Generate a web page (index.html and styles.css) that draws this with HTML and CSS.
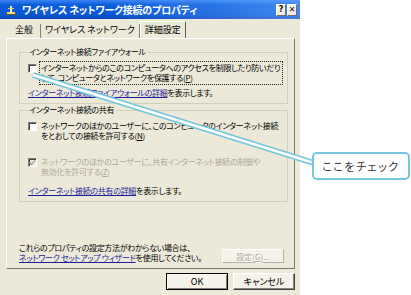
FILE: index.html
```html
<!DOCTYPE html>
<html lang="ja">
<head>
  <meta charset="UTF-8" />
  <title>ワイヤレス ネットワーク接続のプロパティ</title>
  <meta name="viewport" content="width=device-width, initial-scale=1.0" />
  <link rel="stylesheet" href="styles.css">
</head>
<body>
  <div class="stage">
    <div class="dialog">
      <div class="titlebar">
        <svg class="app-icon" width="12" height="12" viewBox="0 0 12 12">
          <rect x="1" y="8" width="10" height="3" fill="#6b5a1e" />
          <rect x="2" y="8" width="8" height="2" fill="#f2d77a" />
          <rect x="5" y="2" width="2" height="7" fill="#fbeeb8" />
          <rect x="3" y="4" width="6" height="1" fill="#e8c860" />
        </svg>
        <span class="title">ワイヤレス ネットワーク接続のプロパティ</span>
        <span class="tb-btn">?</span>
        <span class="tb-btn">✕</span>
      </div>

      <div class="tabs">
        <span class="tab first">全般</span>
        <span class="tab">ワイヤレス ネットワーク</span>
        <span class="tab active">詳細設定</span>
      </div>

      <div class="panel">
        <fieldset class="group">
          <legend>インターネット接続ファイアウォール</legend>
          <div class="check-row">
            <span class="cb"></span>
            <span class="cb-label focus">インターネットからのこのコンピュータへのアクセスを制限したり防いだり<br>して、コンピュータとネットワークを保護する(<u>P</u>)</span>
          </div>
          <p class="more"><a href="#">インターネット接続ファイアウォールの詳細</a>を表示します。</p>
        </fieldset>

        <fieldset class="group second">
          <legend>インターネット接続の共有</legend>
          <div class="check-row">
            <span class="cb"></span>
            <span class="cb-label">ネットワークのほかのユーザーに、このコンピュータのインターネット接続<br>をとおしての接続を許可する(<u>N</u>)</span>
          </div>
          <div class="check-row disabled">
            <span class="cb">
              <svg width="7" height="7" viewBox="0 0 7 7"><path d="M0.5 3.2 L2.6 5.3 L6.5 1.2" fill="none" stroke="#aca899" stroke-width="1.6" /></svg>
            </span>
            <span class="cb-label">ネットワークのほかのユーザーに、共有インターネット接続の制御や<br>無効化を許可する(<u>Z</u>)</span>
          </div>
          <p class="more"><a href="#">インターネット接続の共有の詳細</a>を表示します。</p>
        </fieldset>

        <div class="panel-foot">
          <p class="hint">これらのプロパティの設定方法がわからない場合は、<br><a href="#">ネットワーク セットアップ ウィザード</a>を使用してください。</p>
          <button class="btn small" disabled>設定(<u>G</u>)...</button>
        </div>
      </div>

      <div class="actions">
        <button class="btn default">OK</button>
        <button class="btn">キャンセル</button>
      </div>
    </div>

    <svg class="pointer" width="411" height="295" viewBox="0 0 411 295">
      <line x1="33" y1="75" x2="314" y2="163" stroke="#74c6de" stroke-width="6" />
      <line x1="33" y1="75" x2="314" y2="163" stroke="#fff" stroke-width="2.4" />
    </svg>
    <div class="callout">ここをチェック</div>
  </div>
</body>
</html>
```

FILE: styles.css
```css
* {
  box-sizing: border-box;
}

body {
  margin: 0;
  background: #fff;
  font-family: "Noto Sans CJK JP", "Noto Sans", sans-serif;
  font-size: 8px;
  line-height: 10px;
  letter-spacing: -0.3px;
  font-feature-settings: "palt";
  color: #000;
  overflow: hidden;
}

.stage {
  position: relative;
  width: 411px;
  height: 295px;
  overflow: hidden;
}

.dialog {
  width: 300px;
  height: 300px;
  background: #ece9d8;
  display: flex;
  flex-direction: column;
}

/* title bar */
.titlebar {
  flex: none;
  height: 19px;
  display: flex;
  align-items: center;
  padding: 0 3px 0 5px;
  background:
    linear-gradient(to right, rgba(255, 255, 255, 0) 35%, rgba(110, 170, 255, 0.55)),
    linear-gradient(#3b86f2, #0b5ddc 25%, #0a58d6 75%, #0847b4);
}

.title {
  flex: 1;
  margin-left: 5px;
  color: #fff;
  font-weight: bold;
  font-size: 10px;
  letter-spacing: -0.2px;
}

.tb-btn {
  width: 10px;
  height: 12px;
  margin-left: 1px;
  display: flex;
  justify-content: center;
  align-items: center;
  background: #f1efe6;
  border: 1px solid #fff;
  border-right-color: #6d6d6d;
  border-bottom-color: #6d6d6d;
  font-family: "DejaVu Sans", sans-serif;
  font-weight: bold;
  font-size: 8px;
  line-height: 1;
  letter-spacing: 0;
  color: #111;
}

/* tabs */
.tabs {
  flex: none;
  height: 19px;
  display: flex;
  align-items: flex-end;
  padding-left: 8px;
  font-size: 9px;
  letter-spacing: 0;
}

.tab {
  height: 14px;
  padding: 1px 4px 0;
  border-right: 1px solid #85847c;
  white-space: nowrap;
}

.tab.first {
  padding: 1px 7px 0;
}

.tab.active {
  height: 17px;
  padding-top: 3px;
  border-top: 1px solid #fff;
  border-left: 1px solid #fff;
  border-right-color: #5f5e58;
}

/* property page */
.panel {
  flex: none;
  height: 231px;
  margin: 0 5px 0 6px;
  padding: 0 6px 5px 12px;
  border: 1px solid;
  border-color: #fff #7a786e #7a786e #fff;
  display: flex;
  flex-direction: column;
}

.group {
  margin: 8px 0 0;
  padding: 5px 0 5px 8px;
  border: 1px solid #d0d0bf;
  min-width: 0;
}

.group.second {
  margin-top: 1px;
}

.group legend {
  padding: 0 2px 0 1px;
}

.check-row {
  display: flex;
  align-items: flex-start;
}

.check-row.disabled {
  margin-top: 14px;
  color: #aca899;
}

.cb {
  flex: none;
  width: 9px;
  height: 9px;
  margin-top: 2px;
  display: flex;
  justify-content: center;
  align-items: center;
  background: #fff;
  border: 1px solid;
  border-color: #808080 #fff #fff #808080;
  box-shadow: inset 1px 1px #404040;
}

.disabled .cb {
  background: #f1efe6;
}

.cb-label {
  margin-left: 3px;
  padding: 1px 1px;
  white-space: nowrap;
}

.cb-label.focus {
  padding: 1px 2px 1px 1px;
  outline: 1px dotted #222;
}

.more {
  margin: 4px 0 0;
  white-space: nowrap;
}

.check-row.disabled + .more {
  margin-top: 8px;
}

a {
  color: #1d1d9c;
  text-decoration: underline;
}

.panel-foot {
  margin-top: auto;
  display: flex;
  justify-content: space-between;
  align-items: flex-end;
}

.hint {
  margin: 0;
  white-space: nowrap;
}

/* buttons */
.btn {
  height: 17px;
  width: 62px;
  padding: 0;
  font: inherit;
  font-size: 9px;
  line-height: 13px;
  letter-spacing: 0;
  color: #000;
  background: #f4f2e9;
  border: 1px solid;
  border-color: #fff #404040 #404040 #fff;
  box-shadow: inset -1px -1px #8a887e;
  border-radius: 0;
}

.btn.default {
  border-color: #000;
  box-shadow: inset 1px 1px #fff, inset -1px -1px #808080;
}

.btn.small {
  height: 14px;
  margin-right: 4px;
  line-height: 11px;
  font-size: 8px;
  color: #aca899;
  text-shadow: 1px 1px #fff;
  border-color: #fff #b4b2a8 #b4b2a8 #fff;
  box-shadow: none;
}

.actions {
  flex: none;
  display: flex;
  justify-content: flex-end;
  gap: 5px;
  padding: 4px 5px 0 0;
}

/* annotation overlay */
.pointer {
  position: absolute;
  left: 0;
  top: 0;
  pointer-events: none;
}

.callout {
  position: absolute;
  left: 312px;
  top: 152px;
  width: 98px;
  height: 28px;
  display: flex;
  justify-content: center;
  align-items: center;
  background: #fff;
  border: 2px solid #74c6de;
  border-radius: 5px;
  font-size: 11px;
  letter-spacing: 1.5px;
  color: #333;
}
```
